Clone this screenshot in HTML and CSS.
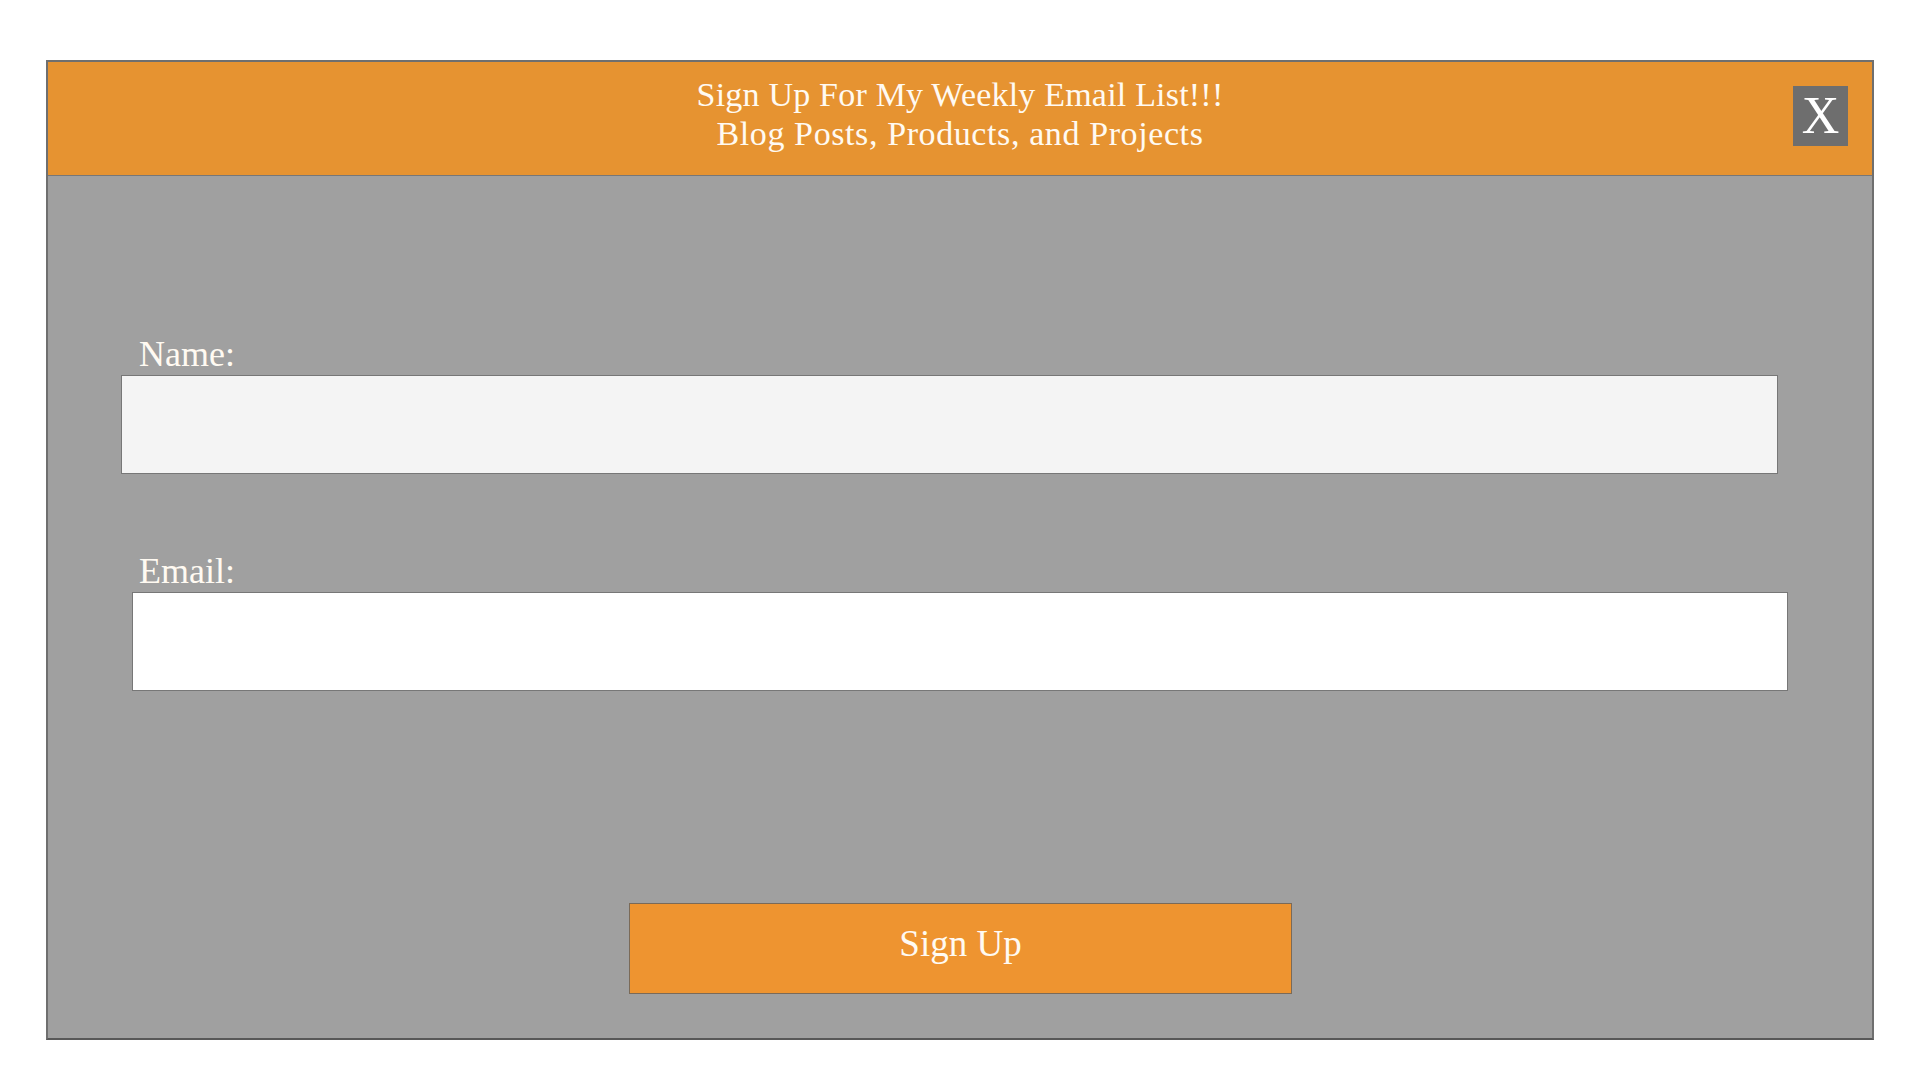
FILE: index.html
```html
<!DOCTYPE html>
<html lang="en">
<head>
<meta charset="utf-8">
<title>Sign Up</title>
<link rel="stylesheet" href="styles.css">
</head>
<body>
<div class="page">
  <div class="modal">
    <div class="modal-header">
      <div class="title"><span class="line line-1">Sign Up For My Weekly Email List!!!</span><span class="line line-2">Blog Posts, Products, and Projects</span></div>
      <button class="close" type="button">X</button>
    </div>
    <form class="modal-body">
      <div class="field field-name">
        <label class="label" for="name">Name:</label>
        <input class="input input-name" id="name" type="text">
      </div>
      <div class="field field-email">
        <label class="label" for="email">Email:</label>
        <input class="input input-email" id="email" type="email">
      </div>
      <div class="actions">
        <button class="submit" type="button">Sign Up</button>
      </div>
    </form>
  </div>
</div>
</body>
</html>
```

FILE: styles.css
```css
* { box-sizing: border-box; }

html, body {
  margin: 0;
  padding: 0;
  background: #ffffff;
}

body {
  font-family: "Liberation Serif", "DejaVu Serif", serif;
  color: #fffaf2;
}

.page {
  width: 1920px;
  height: 1080px;
  padding: 60px 46px 40px 46px;
}

.modal {
  height: 980px;
  border: 2px solid #6f6f6f;
  border-bottom-color: #585858;
  background: #a0a0a0;
  display: flex;
  flex-direction: column;
}

.modal-header {
  position: relative;
  height: 114px;
  padding: 13px 0 22px 0;
  background: #e69331;
  border-bottom: 1px solid #777777;
}

.title {
  font-size: 34px;
  line-height: 39px;
  text-align: center;
  color: #fffaf2;
}

.line { display: block; }
.line-1 { letter-spacing: 0.2px; }
.line-2 { letter-spacing: 0.6px; }

.close {
  position: absolute;
  top: 24px;
  right: 24px;
  width: 55px;
  height: 60px;
  padding: 0;
  border: none;
  background: #6e6e6e;
  color: #ffffff;
  font-family: "Liberation Serif", serif;
  font-size: 52px;
  line-height: 60px;
  text-align: center;
}

.modal-body {
  flex: 1;
  margin: 0;
  padding-top: 158px;
  display: flex;
  flex-direction: column;
}

.field {
  display: flex;
  flex-direction: column;
}

.label {
  display: block;
  font-size: 36px;
  line-height: 40px;
  color: #fffaf2;
  margin-bottom: 1px;
}

.field-name .label { padding-left: 91px; }
.field-email .label { padding-left: 91px; }

.field-email { margin-top: 77px; }

.input {
  display: block;
  height: 99px;
  border: 1px solid #777777;
  margin: 0;
  padding: 0 10px;
  font-family: "Liberation Serif", serif;
  font-size: 30px;
  outline: none;
}

.input-name {
  margin-left: 73px;
  width: 1657px;
  background: #f4f4f4;
}

.input-email {
  margin-left: 84px;
  width: 1656px;
  background: #ffffff;
}

.actions {
  margin-top: 212px;
  display: flex;
  justify-content: center;
}

.submit {
  width: 663px;
  height: 91px;
  margin-left: 1px;
  padding: 21px 0 31px 0;
  border: 1px solid #7a6a58;
  background: #ee9430;
  color: #fffaf2;
  font-family: "Liberation Serif", serif;
  font-size: 37px;
  line-height: 37px;
  text-align: center;
}
```
